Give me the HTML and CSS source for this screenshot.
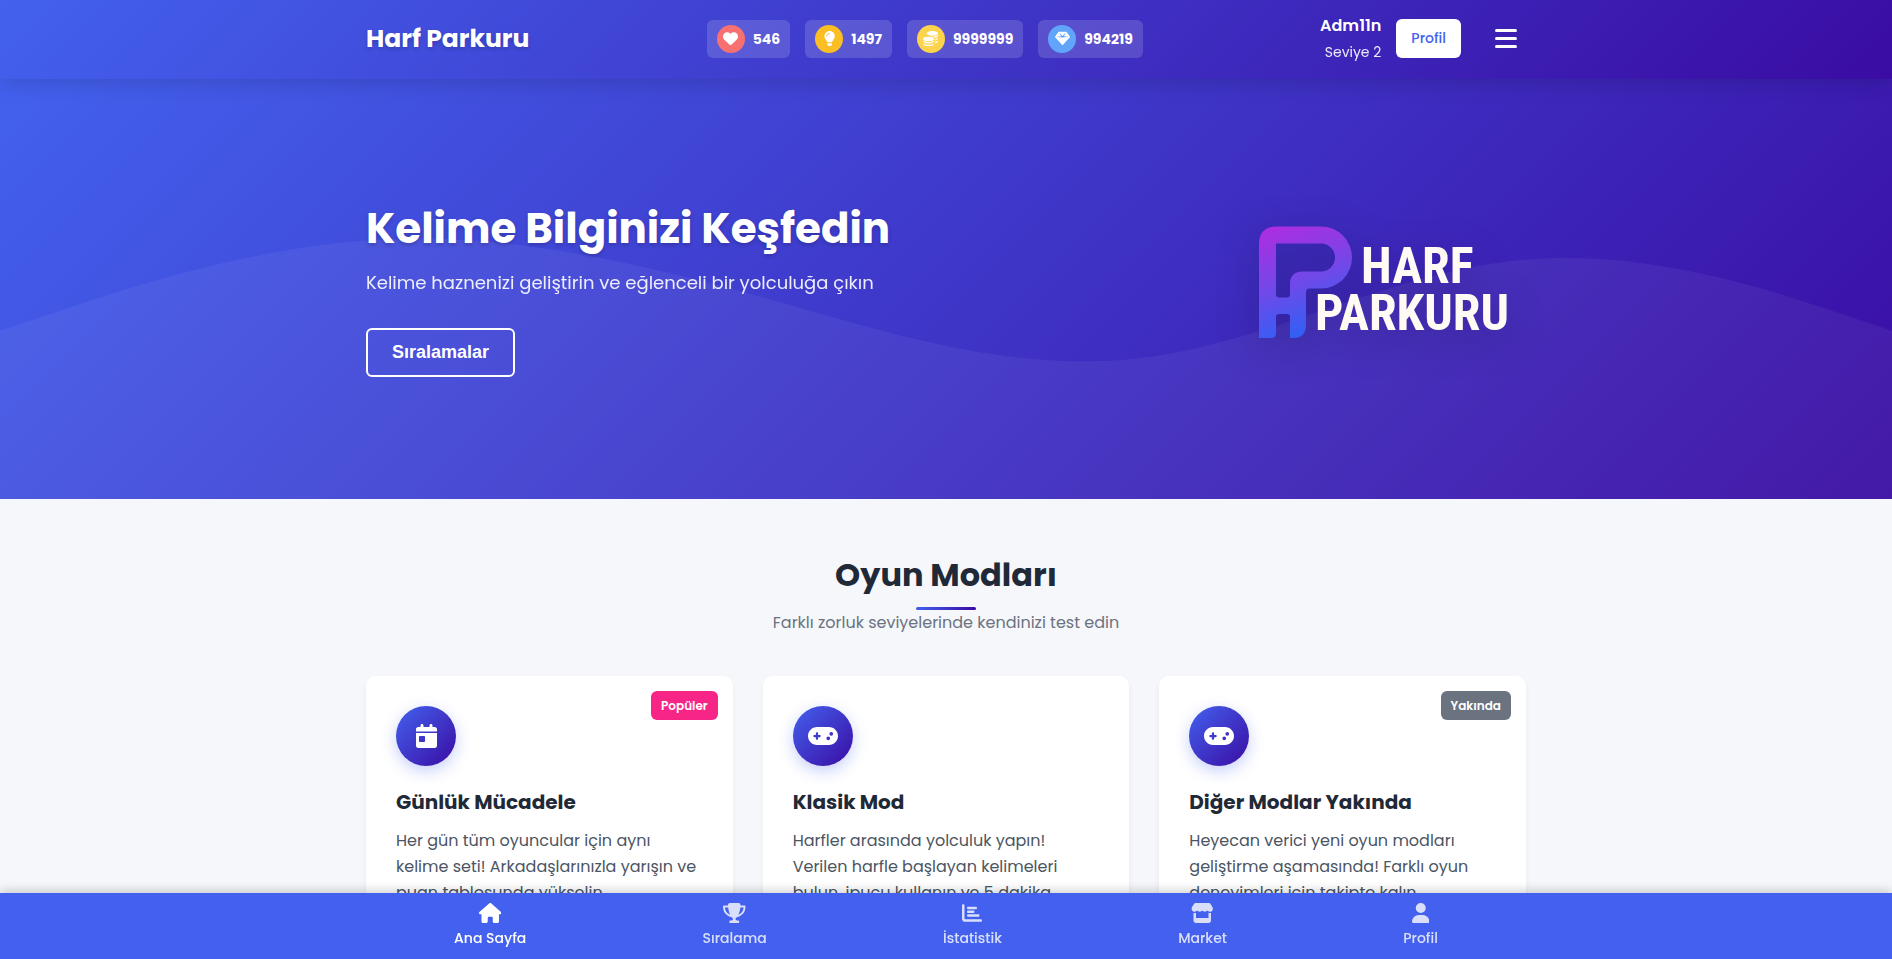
FILE: index.html
```html
<!DOCTYPE html>
<html lang="tr">
<head>
    <meta charset="UTF-8">
    <meta name="viewport" content="width=device-width, initial-scale=1.0">
    <title>Harf Parkuru</title>
    <link rel="stylesheet" href="styles.css">
</head>
<body>
    <header class="header">
        <div class="container header-content">
            <a href="#" class="logo">Harf Parkuru</a>

            <div class="stats">
                <div class="stat-item">
                    <span class="stat-icon heart">
                        <svg viewBox="0 0 512 512"><path d="M47.6 300.4L228.3 469.1c7.5 7 17.4 10.9 27.7 10.9s20.2-3.9 27.7-10.9L464.4 300.4c30.4-28.3 47.6-68 47.6-109.5v-5.8c0-69.9-50.5-129.5-119.4-141C347 36.5 300.6 51.4 268 84L256 96 244 84c-32.6-32.6-79-47.5-124.6-39.9C50.5 55.6 0 115.2 0 185.1v5.8c0 41.5 17.2 81.2 47.6 109.5z"/></svg>
                    </span>
                    <span>546</span>
                </div>
                <div class="stat-item">
                    <span class="stat-icon hint">
                        <svg viewBox="0 0 384 512"><path d="M272 384c9.6-31.9 29.5-59.1 49.2-86.2c5.2-7.1 10.4-14.2 15.4-21.4c19.8-28.5 31.4-63 31.4-100.3C368 78.8 289.2 0 192 0S16 78.8 16 176c0 37.3 11.6 71.9 31.4 100.3c5 7.2 10.2 14.3 15.4 21.4c19.8 27.1 39.7 54.4 49.2 86.2H272zM192 512c44.2 0 80-35.8 80-80V416H112v16c0 44.2 35.8 80 80 80zM112 176c0 8.8-7.2 16-16 16s-16-7.2-16-16c0-61.9 50.1-112 112-112c8.8 0 16 7.2 16 16s-7.2 16-16 16c-44.2 0-80 35.8-80 80z"/></svg>
                    </span>
                    <span>1497</span>
                </div>
                <div class="stat-item">
                    <span class="stat-icon coin">
                        <svg viewBox="0 0 512 512"><ellipse cx="320" cy="80" rx="192" ry="80"/><path d="M512 138v14c0 40-44 68-108 78-30-38-96-64-176-66 30 14 60 18 92 18 82 0 156-20 192-44zM416 272c40-8 72-20 96-36v14c0 34-40 60-96 70zM416 368c40-8 72-20 96-36v14c0 34-40 60-96 70z"/><ellipse cx="192" cy="272" rx="192" ry="80"/><path d="M0 332c36 28 110 50 192 50s156-22 192-50v20c0 44-86 72-192 72S0 396 0 352zM0 424c36 28 110 46 192 46s156-18 192-46v16c0 44-86 72-192 72S0 484 0 440z"/></svg>
                    </span>
                    <span>9999999</span>
                </div>
                <div class="stat-item">
                    <span class="stat-icon gem">
                        <svg viewBox="0 0 512 512"><path d="M116.7 33.8c4.5-6.1 11.7-9.8 19.3-9.8H376c7.6 0 14.8 3.6 19.3 9.8l112 152c6.8 9.2 6.1 21.9-1.5 30.4l-232 256c-4.5 5-11 7.9-17.8 7.9s-13.2-2.9-17.8-7.9l-232-256c-7.7-8.5-8.3-21.2-1.5-30.4l112-152zm38.5 39.8c-3.3 2.5-4.2 7-2.1 10.5l57.4 95.6L63.3 192c-4.1 .3-7.3 3.8-7.3 8s3.2 7.6 7.3 8l192 16c.4 0 .9 0 1.3 0l192-16c4.1-.3 7.3-3.8 7.3-8s-3.2-7.6-7.3-8L301.5 179.8l57.4-95.6c2.1-3.5 1.2-8.1-2.1-10.5s-7.9-2-10.7 1L256 172.2 165.9 74.6c-2.8-3-7.4-3.4-10.7-1z"/></svg>
                    </span>
                    <span>994219</span>
                </div>
            </div>

            <div class="user-area">
                <div class="user-info">
                    <div class="user-name">Adm11n</div>
                    <div class="user-level">Seviye 2</div>
                </div>
                <a href="#" class="profile-btn">Profil</a>
                <button class="menu-toggle" type="button" aria-label="Menü">
                    <span></span>
                    <span></span>
                    <span></span>
                </button>
            </div>
        </div>
    </header>

    <section class="hero">
        <svg class="hero-wave" viewBox="0 0 1440 320" preserveAspectRatio="xMidYMax slice">
            <path d="M0,192L48,176C96,160,192,128,288,122.7C384,117,480,139,576,165.3C672,192,768,224,864,213.3C960,203,1056,149,1152,138.7C1248,128,1344,160,1392,176L1440,192L1440,320L0,320Z"/>
        </svg>
        <div class="container hero-content">
            <div class="hero-text">
                <h1>Kelime Bilginizi Keşfedin</h1>
                <p>Kelime haznenizi geliştirin ve eğlenceli bir yolculuğa çıkın</p>
                <button class="hero-btn" type="button">Sıralamalar</button>
            </div>
            <svg class="hero-logo" viewBox="0 0 300 160" role="img" aria-label="Harf Parkuru">
                <defs>
                    <linearGradient id="markFill" gradientUnits="userSpaceOnUse" x1="40" y1="15" x2="78" y2="130">
                        <stop offset="0" stop-color="#b12be0"/>
                        <stop offset="0.5" stop-color="#7547e8"/>
                        <stop offset="1" stop-color="#2c62f5"/>
                    </linearGradient>
                </defs>
                <path fill="url(#markFill)" fill-rule="evenodd" d="M33 129V35Q33 17.500 51 17.500H95A31 31 0 0 1 95 79.500H83Q80 79.500 80 83V116Q80 129 67 129H64V108Q64 105 61 105H53Q50 105 50 108V124Q50 129 45 129ZM50 34.500V85Q50 88.500 53 88.500H61Q64 88.500 64 85V75Q64 62.500 77 62.500H95A14 14 0 0 0 95 34.500Z"/>
                <text class="logo-word" x="135" y="74">HARF</text>
                <text class="logo-word" x="89" y="121">PARKURU</text>
            </svg>
        </div>
    </section>

    <main class="game-modes">
        <div class="container">
            <h2 class="section-title">Oyun Modları</h2>
            <p class="section-subtitle">Farklı zorluk seviyelerinde kendinizi test edin</p>

            <div class="modes-grid">
                <article class="mode-card">
                    <span class="badge popular">Popüler</span>
                    <div class="mode-icon">
                        <svg viewBox="0 0 448 512"><path d="M128 0c17.700 0 32 14.300 32 32V64H288V32c0-17.700 14.300-32 32-32s32 14.300 32 32V64h48c26.500 0 48 21.500 48 48v48H0V112C0 85.500 21.500 64 48 64H96V32c0-17.700 14.300-32 32-32zM0 192H448V464c0 26.500-21.500 48-48 48H48c-26.500 0-48-21.500-48-48V192zm80 64c-8.800 0-16 7.200-16 16v96c0 8.800 7.200 16 16 16h96c8.800 0 16-7.200 16-16V272c0-8.800-7.200-16-16-16H80z"/></svg>
                    </div>
                    <h3>Günlük Mücadele</h3>
                    <p>Her gün tüm oyuncular için aynı kelime seti! Arkadaşlarınızla yarışın ve puan tablosunda yükselin.</p>
                </article>

                <article class="mode-card">
                    <div class="mode-icon">
                        <svg viewBox="0 0 640 512"><path d="M192 64C86 64 0 150 0 256S86 448 192 448H448c106 0 192-86 192-192s-86-192-192-192H192zM496 168a40 40 0 1 1 0 80 40 40 0 1 1 0-80zM392 304a40 40 0 1 1 80 0 40 40 0 1 1 -80 0zM168 200c0-13.300 10.700-24 24-24s24 10.700 24 24v32h32c13.300 0 24 10.700 24 24s-10.700 24-24 24H216v32c0 13.300-10.700 24-24 24s-24-10.700-24-24V280H136c-13.300 0-24-10.700-24-24s10.700-24 24-24h32V200z"/></svg>
                    </div>
                    <h3>Klasik Mod</h3>
                    <p>Harfler arasında yolculuk yapın! Verilen harfle başlayan kelimeleri bulun, ipucu kullanın ve 5 dakika</p>
                </article>

                <article class="mode-card">
                    <span class="badge soon">Yakında</span>
                    <div class="mode-icon">
                        <svg viewBox="0 0 640 512"><path d="M192 64C86 64 0 150 0 256S86 448 192 448H448c106 0 192-86 192-192s-86-192-192-192H192zM496 168a40 40 0 1 1 0 80 40 40 0 1 1 0-80zM392 304a40 40 0 1 1 80 0 40 40 0 1 1 -80 0zM168 200c0-13.300 10.700-24 24-24s24 10.700 24 24v32h32c13.300 0 24 10.700 24 24s-10.700 24-24 24H216v32c0 13.300-10.700 24-24 24s-24-10.700-24-24V280H136c-13.300 0-24-10.700-24-24s10.700-24 24-24h32V200z"/></svg>
                    </div>
                    <h3>Diğer Modlar Yakında</h3>
                    <p>Heyecan verici yeni oyun modları geliştirme aşamasında! Farklı oyun deneyimleri için takipte kalın.</p>
                </article>
            </div>
        </div>
    </main>

    <nav class="bottom-nav">
        <div class="container bottom-nav-list">
            <a href="#" class="nav-item active">
                <svg viewBox="0 0 576 512"><path d="M575.800 255.500c0 18-15 32.100-32 32.100h-32l.7 160.200c0 2.700-.2 5.400-.5 8.100V472c0 22.100-17.900 40-40 40H392c-22.100 0-40-17.900-40-40V384c0-17.700-14.300-32-32-32H256c-17.700 0-32 14.300-32 32v88c0 22.100-17.900 40-40 40H104c-22.100 0-40-17.900-40-40V287.600H32c-18 0-32-14-32-32.100c0-9 3-17 10-24L266.400 8c7-7 15-8 22-8s15 2 21 7L564.800 231.500c8 7 12 15 11 24z"/></svg>
                <span>Ana Sayfa</span>
            </a>
            <a href="#" class="nav-item">
                <svg viewBox="0 0 576 512"><path d="M400 0H176c-26.500 0-48.100 21.800-47.100 48.200c.2 5.300 .4 10.600 .7 15.800H24C10.700 64 0 74.700 0 88c0 92.600 33.500 157 78.500 200.700c44.300 43.100 98.300 64.800 138.100 75.800c23.400 6.500 39.400 26 39.400 45.600c0 20.900-17 37.900-37.900 37.900H192c-17.700 0-32 14.300-32 32s14.300 32 32 32H384c17.700 0 32-14.300 32-32s-14.300-32-32-32H357.900C337 448 320 431 320 410.100c0-19.600 15.900-39.200 39.400-45.600c39.900-11 93.900-32.700 138.200-75.800C542.500 245 576 180.600 576 88c0-13.300-10.700-24-24-24H446.400c.3-5.200 .5-10.400 .7-15.800C448.100 21.800 426.500 0 400 0zM48.900 112h84.400c9.100 90.100 29.200 150.300 51.900 190.600c-24.900-11-50.800-26.500-73.200-48.300c-32-31.100-58-76-63-142.300zM464.100 254.300c-22.400 21.800-48.300 37.300-73.200 48.300c22.700-40.300 42.800-100.500 51.900-190.600h84.400c-5.100 66.300-31.100 111.200-63 142.300z"/></svg>
                <span>Sıralama</span>
            </a>
            <a href="#" class="nav-item">
                <svg viewBox="0 0 512 512"><path d="M32 32c17.700 0 32 14.300 32 32V400c0 8.800 7.200 16 16 16H480c17.700 0 32 14.300 32 32s-14.300 32-32 32H80c-44.200 0-80-35.800-80-80V64C0 46.300 14.300 32 32 32zm96 96c0-17.700 14.300-32 32-32l192 0c17.700 0 32 14.300 32 32s-14.300 32-32 32l-192 0c-17.700 0-32-14.300-32-32zm32 64H288c17.700 0 32 14.300 32 32s-14.300 32-32 32H160c-17.700 0-32-14.300-32-32s14.300-32 32-32zm0 96H416c17.700 0 32 14.300 32 32s-14.300 32-32 32H160c-17.700 0-32-14.300-32-32s14.300-32 32-32z"/></svg>
                <span>İstatistik</span>
            </a>
            <a href="#" class="nav-item">
                <svg viewBox="0 0 576 512"><path d="M547.600 103.800L490.300 13.100C485.200 5 476.100 0 466.400 0H109.600C99.900 0 90.800 5 85.700 13.100L28.300 103.800c-29.600 46.800-3.400 111.900 51.900 119.400c4 .5 8.100 .8 12.100 .8c26.100 0 49.300-11.400 65.200-29c15.900 17.600 39.100 29 65.200 29c26.100 0 49.300-11.400 65.200-29c15.900 17.600 39.100 29 65.200 29c26.200 0 49.300-11.400 65.200-29c16 17.600 39.100 29 65.200 29c4.100 0 8.100-.3 12.100-.8c55.500-7.400 81.800-72.500 52.100-119.400zM499.700 254.900c-5.300 .7-10.700 1.100-16.200 1.100c-12.400 0-24.300-1.900-35.400-5.300V384H128V250.600c-11.200 3.500-23.200 5.400-35.600 5.400c-5.500 0-11-.4-16.300-1.100c-4.100-.6-8.100-1.300-12-2.300V448c0 35.300 28.700 64 64 64H448c35.300 0 64-28.700 64-64V252.600c-4 1-8 1.800-12.300 2.300z"/></svg>
                <span>Market</span>
            </a>
            <a href="#" class="nav-item">
                <svg viewBox="0 0 448 512"><path d="M224 256A128 128 0 1 0 224 0a128 128 0 1 0 0 256zm-45.700 48C79.800 304 0 383.800 0 482.300C0 498.700 13.300 512 29.700 512H418.300c16.400 0 29.700-13.300 29.700-29.700C448 383.800 368.200 304 269.700 304H178.300z"/></svg>
                <span>Profil</span>
            </a>
        </div>
    </nav>
</body>
</html>
```
FILE: styles.css
```css
:root {
    --primary: #4361ee;
    --secondary: #3a0ca3;
    --accent: #f72585;
    --dark: #1f2937;
    --gray: #6b7280;
    --gradient: linear-gradient(135deg, var(--primary), var(--secondary));
}

* {
    margin: 0;
    padding: 0;
    box-sizing: border-box;
}

body {
    font-family: 'Poppins', 'Inter', sans-serif;
    background: #f5f7fb;
    color: var(--dark);
    line-height: 26px;
    padding-bottom: 66px;
}

a {
    color: inherit;
    text-decoration: none;
}

svg {
    fill: currentColor;
}

.container {
    width: 100%;
    max-width: 1200px;
    margin: 0 auto;
    padding: 0 20px;
}

/* Header */
.header {
    position: sticky;
    top: 0;
    z-index: 100;
    background: var(--gradient);
    color: #fff;
    box-shadow: 0 4px 20px rgba(0, 0, 0, 0.15);
}

.header-content {
    display: flex;
    align-items: center;
    justify-content: space-between;
    min-height: 79px;
    padding-bottom: 2px;
}

.logo {
    font-size: 25px;
    font-weight: 700;
    text-shadow: 0 2px 4px rgba(0, 0, 0, 0.2);
}

.stats {
    display: flex;
    gap: 15px;
}

.stat-item {
    display: flex;
    align-items: center;
    gap: 8px;
    padding: 5px 10px;
    border-radius: 6px;
    background: rgba(255, 255, 255, 0.15);
    font-size: 14px;
    font-weight: 700;
}

.stat-icon {
    display: flex;
    align-items: center;
    justify-content: center;
    width: 28px;
    height: 28px;
    border-radius: 50%;
}

.stat-icon svg {
    height: 15px;
}

.stat-icon.heart {
    background: #f87171;
}

.stat-icon.hint {
    background: #fbbf24;
}

.stat-icon.coin {
    background: #fcd34d;
}

.stat-icon.gem {
    background: #60a5fa;
}

.user-area {
    display: flex;
    align-items: center;
    gap: 15px;
}

.user-info {
    text-align: right;
}

.user-name {
    font-size: 16px;
    font-weight: 600;
}

.user-level {
    font-size: 14px;
    opacity: 0.9;
}

.profile-btn {
    padding: 6px 15px;
    border-radius: 6px;
    background: #fff;
    color: var(--primary);
    font-size: 14px;
    font-weight: 500;
    line-height: 27px;
}

.menu-toggle {
    display: flex;
    flex-direction: column;
    align-items: center;
    justify-content: center;
    gap: 5px;
    width: 40px;
    height: 40px;
    margin-left: 10px;
    border: none;
    background: none;
    cursor: pointer;
}

.menu-toggle span {
    width: 22px;
    height: 3px;
    border-radius: 2px;
    background: #fff;
}

/* Hero */
.hero {
    position: relative;
    background: var(--gradient);
    color: #fff;
    overflow: hidden;
}

.hero-wave {
    position: absolute;
    inset: 0;
    width: 100%;
    height: 100%;
    opacity: 0.05;
}

.hero-content {
    position: relative;
    display: flex;
    align-items: center;
    justify-content: space-between;
    min-height: 420px;
}

.hero h1 {
    margin-bottom: 12px;
    font-size: 42px;
    font-weight: 700;
    line-height: 54px;
    text-shadow: 0 2px 4px rgba(0, 0, 0, 0.2);
}

.hero p {
    margin-bottom: 30px;
    font-size: 18px;
    line-height: 30px;
    opacity: 0.9;
}

.hero-btn {
    padding: 12px 24px;
    border: 2px solid #fff;
    border-radius: 6px;
    background: transparent;
    color: #fff;
    font-family: 'Liberation Sans', sans-serif;
    font-size: 18px;
    font-weight: 700;
    line-height: 21px;
    cursor: pointer;
}

.hero-logo {
    width: 300px;
    filter: drop-shadow(0 10px 20px rgba(0, 0, 0, 0.2));
}

.logo-word {
    fill: #fffaf3;
    font-family: 'Roboto Condensed', 'Roboto', sans-serif;
    font-size: 50px;
    font-weight: 700;
}

/* Oyun modları */
.game-modes {
    padding: 56px 0 60px;
}

.section-title {
    position: relative;
    padding-bottom: 15px;
    font-size: 32px;
    font-weight: 700;
    line-height: 40px;
    text-align: center;
}

.section-title::after {
    content: '';
    position: absolute;
    bottom: 0;
    left: 50%;
    width: 60px;
    height: 3px;
    border-radius: 2px;
    background: linear-gradient(90deg, var(--primary), var(--secondary));
    transform: translateX(-50%);
}

.section-subtitle {
    margin-bottom: 40px;
    color: var(--gray);
    text-align: center;
}

.modes-grid {
    display: grid;
    grid-template-columns: repeat(3, 1fr);
    gap: 30px;
}

.mode-card {
    position: relative;
    padding: 30px;
    border-radius: 10px;
    background: #fff;
    box-shadow: 0 4px 6px rgba(0, 0, 0, 0.05);
}

.badge {
    position: absolute;
    top: 15px;
    right: 15px;
    padding: 4px 10px;
    border-radius: 6px;
    color: #fff;
    font-size: 12px;
    font-weight: 600;
    line-height: 21px;
}

.badge.popular {
    background: var(--accent);
}

.badge.soon {
    background: var(--gray);
}

.mode-icon {
    display: flex;
    align-items: center;
    justify-content: center;
    width: 60px;
    height: 60px;
    margin-bottom: 20px;
    border-radius: 50%;
    background: var(--gradient);
    color: #fff;
    box-shadow: 0 5px 15px rgba(67, 97, 238, 0.3);
}

.mode-icon svg {
    height: 24px;
}

.mode-card h3 {
    margin-bottom: 10px;
    font-size: 20px;
    font-weight: 700;
    line-height: 32px;
}

.mode-card p {
    color: #4b5563;
}

/* Alt menü */
.bottom-nav {
    position: fixed;
    right: 0;
    bottom: 0;
    left: 0;
    z-index: 100;
    background: var(--primary);
    color: #fff;
    box-shadow: 0 -2px 10px rgba(0, 0, 0, 0.2);
}

.bottom-nav-list {
    display: flex;
    justify-content: space-around;
}

.nav-item {
    display: flex;
    flex-direction: column;
    align-items: center;
    gap: 4px;
    padding: 10px 0;
    font-size: 14px;
    font-weight: 500;
    line-height: 22px;
    opacity: 0.8;
}

.nav-item svg {
    height: 20px;
}

.nav-item.active {
    opacity: 1;
}

@media (max-width: 992px) {
    .modes-grid {
        grid-template-columns: 1fr;
    }

    .header-content,
    .hero-content {
        flex-wrap: wrap;
        gap: 15px;
        padding-top: 15px;
        padding-bottom: 15px;
    }
}
```
